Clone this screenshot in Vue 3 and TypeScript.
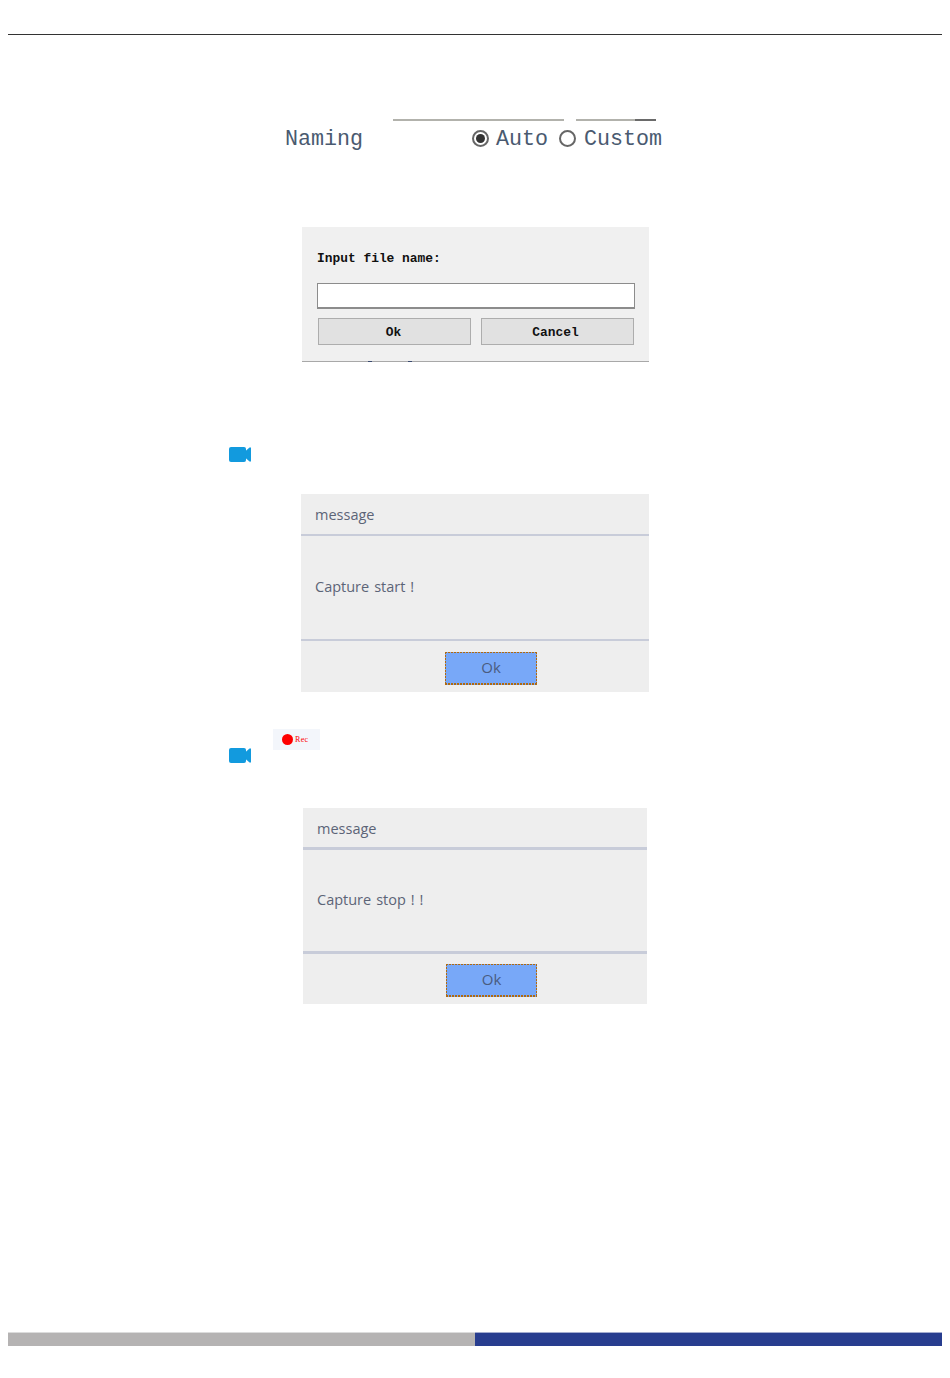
<script setup lang="ts">
interface Message { text: string; cls: string }
const start: Message = { text: 'Capture start !', cls: 'msg-start' }
const stop: Message = { text: 'Capture stop ! !', cls: 'msg-stop' }
</script>

<template>
  <div class="page">
    <div class="top-rule"></div>

    <div class="naming-lines">
      <span class="nl nl-a"></span>
      <span class="nl nl-b"></span>
      <span class="nl nl-c"></span>
    </div>
    <div class="naming">
      <span class="naming-label">Naming</span>
      <span class="radio checked"><i></i></span>
      <span class="radio-text auto">Auto</span>
      <span class="radio"></span>
      <span class="radio-text custom">Custom</span>
    </div>

    <div class="file-dialog">
      <div class="file-label">Input file name:</div>
      <div class="file-input"></div>
      <div class="file-buttons">
        <div class="file-btn btn-ok">Ok</div>
        <div class="file-btn btn-cancel">Cancel</div>
      </div>
      <span class="tick t1"></span>
      <span class="tick t2"></span>
    </div>

    <div class="cam-row first">
      <svg class="cam" width="22" height="15" viewBox="0 0 22 15">
        <rect x="0" y="0" width="17" height="15" rx="2" fill="#129ade" />
        <path d="M16 4.5 L20.5 0.5 H22 V14.5 H20.5 L16 10.5 Z" fill="#129ade" />
      </svg>
    </div>

    <div class="msg" :class="start.cls">
      <div class="msg-head">message</div>
      <div class="msg-body">{{ start.text }}</div>
      <div class="msg-foot"><div class="msg-ok">Ok</div></div>
    </div>

    <div class="cam-row second">
      <svg class="cam" width="22" height="15" viewBox="0 0 22 15">
        <rect x="0" y="0" width="17" height="15" rx="2" fill="#129ade" />
        <path d="M16 4.5 L20.5 0.5 H22 V14.5 H20.5 L16 10.5 Z" fill="#129ade" />
      </svg>
      <div class="rec"><span class="dot"></span><span class="rec-text">Rec</span></div>
    </div>

    <div class="msg" :class="stop.cls">
      <div class="msg-head">message</div>
      <div class="msg-body">{{ stop.text }}</div>
      <div class="msg-foot"><div class="msg-ok">Ok</div></div>
    </div>

    <div class="footer-bar">
      <div class="fb-grey"></div>
      <div class="fb-blue"></div>
    </div>
  </div>
</template>

<style>
html, body { margin: 0; background: #fff; }
</style>

<style scoped>
.page {
  position: relative;
  width: 950px;
  height: 1378px;
  overflow: hidden;
  background: #fff;
  display: flex;
  flex-direction: column;
}
.top-rule {
  margin: 34px 8px 0;
  height: 1px;
  background: #333;
  flex: none;
}
.naming-lines {
  display: flex;
  margin: 84px 0 0 393px;
  height: 2px;
  flex: none;
}
.nl { display: block; height: 2px; background: #b2b2ac; }
.nl-a { width: 171px; margin-right: 12px; }
.nl-b { width: 59px; }
.nl-c { width: 21px; background: #6a6a6a; }
.naming {
  display: flex;
  align-items: center;
  height: 24px;
  margin: 6px 0 0 285px;
  flex: none;
  font-family: "Liberation Mono", monospace;
  font-size: 21.7px;
  color: #4a5a70;
}
.naming-label { width: 187px; }
.radio {
  border: 2px solid #666;
  border-radius: 50%;
  background: #fff;
  display: flex;
  align-items: center;
  justify-content: center;
  box-sizing: border-box;
  width: 17px;
  height: 17px;
  margin-bottom: 2px;
  flex: none;
}
.radio i {
  display: block;
  width: 9px;
  height: 9px;
  border-radius: 50%;
  background: #333;
}
.radio-text { margin-left: 7px; white-space: nowrap; }
.auto { margin-right: 10px; width: 53px; }
.custom { margin-left: 8px; }
.file-dialog {
  position: relative;
  box-sizing: border-box;
  width: 347px;
  height: 135px;
  margin: 76px 0 0 302px;
  padding: 23px 14px 0 15px;
  background: #f0f0f0;
  border-bottom: 1px solid #a8a8a8;
  flex: none;
  font-family: "Liberation Mono", monospace;
  font-size: 12.9px;
  color: #111;
}
.file-label { height: 17px; line-height: 17px; font-weight: 700; }
.file-input {
  box-sizing: border-box;
  height: 26px;
  margin-top: 16px;
  background: #fff;
  border: 1px solid #8c8c8c;
  border-bottom-width: 2px;
}
.file-buttons {
  display: flex;
  gap: 10px;
  margin: 9px 1px 0;
}
.file-btn {
  box-sizing: border-box;
  width: 153px;
  height: 27px;
  line-height: 28px;
  text-align: center;
  background: #e1e1e1;
  border: 1px solid #adadad;
  font-weight: 700;
}
.btn-ok { padding-right: 2px; }
.btn-cancel { padding-right: 4px; }
.tick {
  position: absolute;
  bottom: -1px;
  width: 4px;
  height: 1px;
  background: #3a4a70;
}
.t1 { left: 66px; }
.t2 { left: 106px; }
.cam-row {
  display: flex;
  align-items: flex-end;
  padding-left: 229px;
  flex: none;
}
.cam { display: block; flex: none; }
.cam-row.first { margin-top: 85px; }
.cam-row.second { margin-top: 37px; }
.rec {
  box-sizing: border-box;
  width: 47px;
  height: 21px;
  margin: 0 0 13px 22px;
  padding-left: 9px;
  background: #f3f6fb;
  display: flex;
  align-items: center;
  gap: 2px;
}
.dot {
  width: 11px;
  height: 11px;
  border-radius: 50%;
  background: #fe0000;
  flex: none;
}
.rec-text {
  font-family: "Liberation Serif", serif;
  font-size: 8px;
  letter-spacing: 0.3px;
  color: #fe0000;
}
.msg {
  box-sizing: border-box;
  flex: none;
  display: flex;
  flex-direction: column;
  background: #eee;
  font-family: "Open Sans", sans-serif;
  font-size: 14.5px;
  color: #5c6477;
}
.msg-start { width: 348px; height: 198px; margin: 32px 0 0 301px; }
.msg-stop { width: 344px; height: 196px; margin: 45px 0 0 303px; }
.msg-head {
  box-sizing: border-box;
  height: 42px;
  padding: 10px 14px 0;
  line-height: 22px;
  border-bottom: 2px solid #c8ccd9;
}
.msg-stop .msg-head { border-bottom-width: 3px; }
.msg-body {
  box-sizing: border-box;
  height: 105px;
  padding: 0 14px 2px;
  display: flex;
  align-items: center;
  word-spacing: 1.2px;
  border-bottom: 2px solid #c8ccd9;
}
.msg-stop .msg-body { border-bottom-width: 3px; height: 104px; }
.msg-foot { flex: 1; position: relative; }
.msg-ok {
  --dots-x: repeating-linear-gradient(90deg, #b06a10 0 2px, transparent 2px 3px);
  --dots-y: repeating-linear-gradient(180deg, #b06a10 0 2px, transparent 2px 3px);
  box-sizing: border-box;
  position: absolute;
  top: 11px;
  height: 33px;
  line-height: 31px;
  text-align: center;
  background-color: #78a8f8;
  background-image: var(--dots-x), var(--dots-x), var(--dots-y), var(--dots-y);
  background-size: 100% 1px, 100% 2px, 1px 100%, 1px 100%;
  background-position: 0 0, 0 100%, 0 0, 100% 0;
  background-repeat: no-repeat;
  font-size: 15px;
  color: #4a5c80;
}
.msg-start .msg-ok { left: 144px; width: 92px; }
.msg-stop .msg-ok { left: 143px; width: 91px; top: 10px; }
.footer-bar {
  display: flex;
  position: absolute;
  left: 8px;
  right: 8px;
  top: 1332px;
  height: 14px;
}
.fb-grey { width: 467px; background: #b5b3b3; border-top: 1px solid #dcdcdc; box-sizing: border-box; }
.fb-blue { flex: 1; background: #283d8f; border-top: 1px solid #a4acd0; box-sizing: border-box; }
</style>
